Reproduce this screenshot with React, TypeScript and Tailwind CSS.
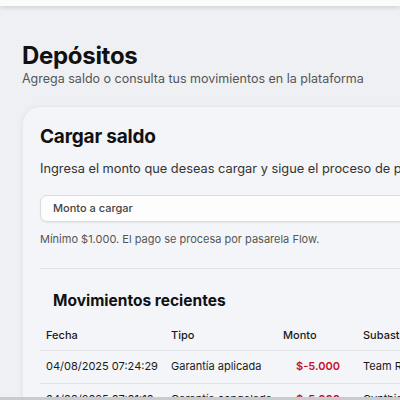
import React from "react";

const rows = [
  { fecha: "04/08/2025 07:24:29", tipo: "Garantía aplicada", monto: "$-5.000", sub: "Team Rocket" },
  { fecha: "04/08/2025 07:01:10", tipo: "Garantía congelada", monto: "$-5.000", sub: "Cynthia" },
];

export default function App() {
  return (
    <div className="relative h-[400px] w-[400px] overflow-hidden bg-[#eef0f4] text-[#111]" style={{ fontFamily: "Inter, 'Noto Sans', sans-serif" }}>
      <div className="h-[6px] bg-[#fbfbfc] shadow-[0_2px_4px_rgba(0,0,0,0.12)]" />
      <div className="pl-[22px] pt-[36px]">
        <h1 className="text-[24px] font-bold leading-[28px] tracking-[-0.3px]">Depósitos</h1>
        <p className="mt-[1px] text-[12.5px] leading-[16px] text-[#555]">Agrega saldo o consulta tus movimientos en la plataforma</p>
        <div className="mt-[19px] w-[460px] rounded-[18px] border border-[#e6e8ec] bg-[#f4f5f8] pl-[17px] pt-[18px] shadow-[0_1px_6px_rgba(0,0,0,0.05)]">
          <h2 className="text-[19px] font-bold leading-[24px] tracking-[-0.2px]">Cargar saldo</h2>
          <p className="mt-[11px] whitespace-nowrap text-[12.8px] leading-[18px] text-[#333]">Ingresa el monto que deseas cargar y sigue el proceso de pago</p>
          <div className="mt-[17px] flex h-[27px] items-center rounded-[7px] border border-[#d9dce1] bg-[#fdfdfd] pl-[12px] text-[11px] font-medium text-[#444] shadow-[0_1px_2px_rgba(0,0,0,0.06)]">
            Monto a cargar
          </div>
          <p className="mt-[9px] text-[11px] leading-[16px] text-[#555]">Mínimo $1.000. El pago se procesa por pasarela Flow.</p>
          <div className="mt-[21px] h-px bg-[#e2e4e8]" />
          <h3 className="mt-[22px] pl-[13px] text-[15.5px] font-bold leading-[20px]">Movimientos recientes</h3>
          <table className="mt-[6px] w-[440px] table-fixed border-collapse text-[11px] text-[#1a1a1a]">
            <thead>
              <tr className="border-b border-[#e2e4e8]">
                <th className="h-[33px] w-[124px] pl-[6px] pt-[3px] text-left font-medium">Fecha</th>
                <th className="w-[113px] pl-[7px] pt-[3px] text-left font-medium">Tipo</th>
                <th className="w-[81px] pl-[6px] pt-[3px] text-left font-medium">Monto</th>
                <th className="pl-[5px] pt-[3px] text-left font-medium">Subasta</th>
              </tr>
            </thead>
            <tbody>
              {rows.map((r) => (
                <tr key={r.fecha} className="border-b border-[#e2e4e8]">
                  <td className="h-[33px] whitespace-nowrap pl-[6px]">{r.fecha}</td>
                  <td className="whitespace-nowrap pl-[7px]">{r.tipo}</td>
                  <td className="pr-[18px] text-right font-semibold text-[#c8102e]">{r.monto}</td>
                  <td className="whitespace-nowrap pl-[5px]">{r.sub}</td>
                </tr>
              ))}
            </tbody>
          </table>
        </div>
      </div>
      <div className="absolute bottom-0 left-0 h-[3px] w-full bg-[#c9cbcf]" />
    </div>
  );
}
